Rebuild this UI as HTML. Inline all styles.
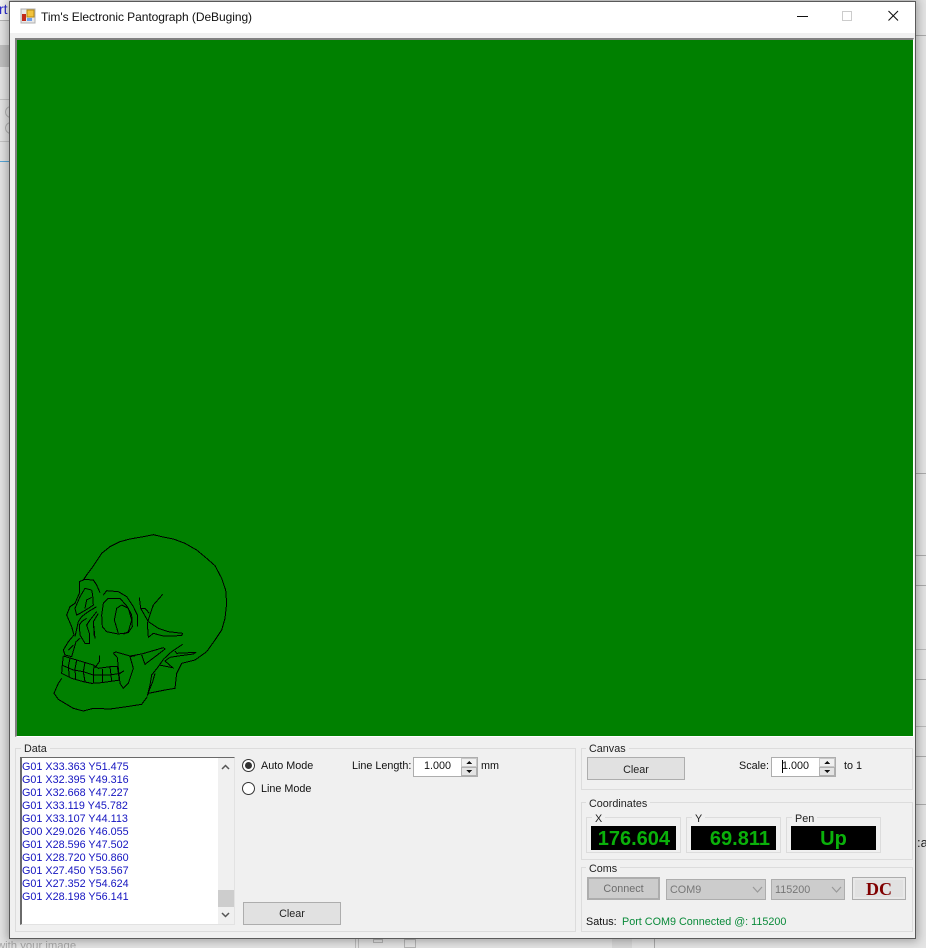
<!DOCTYPE html>
<html><head><meta charset="utf-8"><style>
html,body{margin:0;padding:0;width:926px;height:948px;overflow:hidden;background:#e4e4e4;font-family:"Liberation Sans",sans-serif;font-size:10.8px;color:#111}
div,span{position:absolute;box-sizing:border-box;white-space:nowrap}
.win{left:9px;top:1px;width:907px;height:938px;background:#f0f0f0;border:1px solid #5a5a5a;box-shadow:0 0 9px 2px rgba(0,0,0,.3)}
.gb{border:1px solid #dcdcdc}
.lg{background:#f0f0f0;padding:0 3px;line-height:13px;height:11px;color:#222}
.btn{background:#e1e1e1;border:1px solid #adadad;text-align:center;color:#222}
.li{left:22px;color:#1414c0;line-height:13px;height:13px}
.spin{background:#fff;border:1px solid #adadad}
.disp{background:#000;color:#0ab00a;font-weight:bold;font-size:20px;line-height:26px;height:24px;top:826px;width:85px}
.g{position:absolute;left:0;top:0;width:926px;height:948px}
</style></head><body>
<!-- background strips -->
<div style="left:0;top:0;width:9px;height:20px;background:#f4f4f4;color:#2a2ad0;font-size:14px;line-height:20px;overflow:hidden"><span style="left:-1px;top:-1px">rt</span></div>
<div style="left:0;top:20px;width:9px;height:1px;background:#b5b5b5"></div>
<div style="left:0;top:45px;width:9px;height:22px;background:#c0c0c0"></div>
<div style="left:0;top:99px;width:9px;height:1px;background:#c4c4c4"></div>
<div style="left:5px;top:106px;width:12px;height:12px;border:1px solid #b5b5b5;border-radius:50%"></div>
<div style="left:5px;top:122px;width:12px;height:12px;border:1px solid #b5b5b5;border-radius:50%"></div>
<div style="left:0;top:141px;width:9px;height:1px;background:#c4c4c4"></div>
<div style="left:0;top:161px;width:9px;height:1px;background:#57a7d8"></div>
<div style="left:916px;top:35px;width:10px;height:1px;background:#aaa"></div>
<div style="left:916px;top:473px;width:10px;height:1px;background:#aaa"></div>
<div style="left:916px;top:555px;width:10px;height:1px;background:#aaa"></div>
<div style="left:916px;top:585px;width:10px;height:1px;background:#aaa"></div>
<div style="left:916px;top:649px;width:10px;height:1px;background:#bbb"></div>
<div style="left:916px;top:679px;width:10px;height:1px;background:#aaa"></div>
<div style="left:916px;top:726px;width:10px;height:1px;background:#bbb"></div>
<div style="left:916px;top:756px;width:10px;height:1px;background:#aaa"></div>
<div style="left:916px;top:804px;width:10px;height:1px;background:#aaa"></div>
<div style="left:917px;top:835px;font-size:13px;color:#222">:a</div>
<div style="left:0;top:939px;width:90px;height:9px;overflow:hidden;font-size:11.300px;line-height:13px;color:#a8a8a8"><span style="left:-3px;top:1px">with your image</span></div>
<div style="left:355px;top:938px;width:1px;height:10px;background:#bbb"></div>
<div style="left:358px;top:938px;width:1px;height:10px;background:#bbb"></div>
<div style="left:373px;top:939px;width:10px;height:4px;border:1px solid #b5b5b5"></div>
<div style="left:404px;top:939px;width:12px;height:9px;border:1px solid #b5b5b5"></div>
<div style="left:612px;top:938px;width:20px;height:10px;background:#d8d8d8"></div>
<div style="left:654px;top:938px;width:1px;height:10px;background:#aaa"></div>

<div class="win"></div>
<!-- title bar -->
<div style="left:10px;top:2px;width:905px;height:31px;background:#fff"></div>
<svg class="g" style="position:absolute" shape-rendering="crispEdges">
<rect x="21" y="9" width="14" height="14" fill="#e8e8e8" stroke="#b0b0b0" stroke-width="0.6"/>
<rect x="22" y="14" width="4" height="7" fill="#c22a1a"/>
<rect x="27" y="10" width="7" height="7" fill="#f3c33c" stroke="#b88a10" stroke-width="0.6"/>
<rect x="27" y="18" width="5" height="3" fill="#6f9fe8"/>
<rect x="797" y="16" width="11" height="1" fill="#111"/>
<rect x="842.5" y="11.5" width="9" height="9" fill="none" stroke="#ccc"/>
</svg>
<svg class="g" style="position:absolute"><path d="M888.5 11L898 20.5M898 11L888.5 20.5" stroke="#111" stroke-width="1.1" fill="none"/></svg>
<div style="left:41px;top:10px;font-size:12px;letter-spacing:-.06px;line-height:14px;color:#111">Tim's Electronic Pantograph (DeBuging)</div>

<!-- canvas -->
<div style="left:15px;top:38px;width:899px;height:699px;background:#008000;border-top:2px solid #808080;border-left:2px solid #808080;border-right:1px solid #fff;border-bottom:1px solid #fff"></div>
<svg class="g" style="position:absolute" viewBox="-90 -1575 2778 2844" shape-rendering="crispEdges">
<g fill="none" stroke="#000" stroke-width="3">
<path d="M160 165L170 150 185 130 205 100 215 85 240 65 270 50 300 42 340 35 370 29 395 35 430 42 465 55 500 75 530 100 555 122 575 160 587 195 590 235 585 280 575 315 555 345 530 380 495 405 455 415 440 445 435 490 405 495 355 505 352 512"/>
<path d="M352 512L360 480 365 450 385 425 400 403 425 380 458 358"/>
<path d="M352 510L368 470 375 445"/>
<path d="M95 460L85 475 72 505 85 523 130 550 160 558 190 550 240 552 290 545 335 538 352 515"/>
<path d="M160 163L190 165 200 180 210 203"/>
<path d="M160 165L148 170 148 205 135 235 120 245 110 270 125 305 132 330"/>
<path d="M185 195L165 190 150 215 135 250 140 270 150 265 175 250 190 240 188 210 185 195"/>
<path d="M185 217L170 225 165 250"/>
<path d="M200 245L175 260 155 275 145 290 135 335"/>
<path d="M148 300L155 290 170 280M148 300L150 330 165 355 178 355 178 325 170 300 180 285 200 260"/>
<path d="M205 265L190 290 195 340M190 290L193 335"/>
<path d="M132 330L115 350 100 375 105 390 125 395 138 350 150 340M115 375L130 360"/>
<path d="M220 210L230 197 265 200 290 215 310 245 322 270 322 305"/>
<path d="M270 220L235 220 220 235 215 270 217 305 230 320 265 327 295 323 307 305 305 270 292 245 270 220"/>
<path d="M275 240L260 250 253 285 265 325M275 240L295 250 305 285 295 320 280 328"/>
<path d="M328 217L332 250 355 290 385 310 415 320 458 325 455 332 400 333 370 325 355 337 352 295 358 275 370 240 398 208"/>
<path d="M332 250L345 250 358 265"/>
<path d="M250 384L258 381 300 393 335 387 400 368 405 372 395 380 345 418 335 390"/>
<path d="M250 384L262 398 265 430 270 475 280 490 295 475 310 430 300 395 316 392"/>
<path d="M498 382L440 385 435 378M498 382L490 387 445 393 420 397 405 408 428 428 388 420"/>
<path d="M100 393L140 405 190 420 205 430 240 425 265 425"/>
<path d="M100 393L97 420 95 445 125 460 160 470 185 475 215 473 270 465"/>
<path d="M95 420L130 435 160 440 190 450 240 450 270 445 282 437"/>
<path d="M120 400L115 425 118 455M140 405L135 432 137 462M165 412L160 440 165 470M192 420L190 450 190 475M218 432L218 472M240 425L245 468M262 425L268 464"/>
<path d="M208 392L208 410 195 428"/>
</g></svg>

<!-- Data group -->
<div class="gb" style="left:15px;top:748px;width:561px;height:184px"></div>
<div class="lg" style="left:21px;top:743px">Data</div>
<div style="left:20px;top:757px;width:215px;height:168px;background:#fff;border-top:1px solid #6a6a6a;border-left:2px solid #6a6a6a;border-right:1px solid #e2e2e2;border-bottom:1px solid #e2e2e2"></div>
<div style="left:218px;top:758px;width:16px;height:166px;background:#f0f0f0"></div>
<div style="left:218px;top:890px;width:16px;height:17px;background:#cdcdcd"></div>
<svg class="g" style="position:absolute"><path d="M222 769L225.500 765.500 229 769M222 913L225.500 916.500 229 913" stroke="#555" stroke-width="1.500" fill="none"/></svg>
<div class="li" style="top:761px">G01 X33.363 Y51.475</div>
<div class="li" style="top:774px">G01 X32.395 Y49.316</div>
<div class="li" style="top:787px">G01 X32.668 Y47.227</div>
<div class="li" style="top:800px">G01 X33.119 Y45.782</div>
<div class="li" style="top:813px">G01 X33.107 Y44.113</div>
<div class="li" style="top:826px">G00 X29.026 Y46.055</div>
<div class="li" style="top:839px">G01 X28.596 Y47.502</div>
<div class="li" style="top:852px">G01 X28.720 Y50.860</div>
<div class="li" style="top:865px">G01 X27.450 Y53.567</div>
<div class="li" style="top:878px">G01 X27.352 Y54.624</div>
<div class="li" style="top:891px">G01 X28.198 Y56.141</div>

<!-- radios -->
<svg class="g" style="position:absolute">
<circle cx="248.500" cy="765.500" r="6" fill="#fff" stroke="#333"/>
<circle cx="248.500" cy="765.500" r="3.500" fill="#333"/>
<circle cx="248.500" cy="788.500" r="6" fill="#fff" stroke="#333"/>
</svg>
<div style="left:261px;top:759px;line-height:14px">Auto Mode</div>
<div style="left:261px;top:782px;line-height:14px">Line Mode</div>
<div style="left:352px;top:759px;line-height:14px">Line Length:</div>
<div class="spin" style="left:413px;top:757px;width:65px;height:20px"></div>
<div style="left:424px;top:759px;line-height:14px">1.000</div>
<div style="left:461px;top:758px;width:16px;height:9px;background:#f0f0f0;border:1px solid #c8c8c8"></div>
<div style="left:461px;top:767px;width:16px;height:9px;background:#e4e4e4;border:1px solid #b0b0b0"></div>
<svg class="g" style="position:absolute" shape-rendering="crispEdges"><path d="M466 764h6l-3-3zM466 770h6l-3 3z" fill="#111"/></svg>
<div style="left:481px;top:759px;line-height:14px">mm</div>
<div class="btn" style="left:243px;top:902px;width:98px;height:23px;line-height:22px">Clear</div>

<!-- Canvas group -->
<div class="gb" style="left:581px;top:748px;width:332px;height:42px"></div>
<div class="lg" style="left:586px;top:743px">Canvas</div>
<div class="btn" style="left:587px;top:757px;width:98px;height:23px;line-height:24px">Clear</div>
<div style="left:739px;top:759px;line-height:14px">Scale:</div>
<div class="spin" style="left:771px;top:757px;width:65px;height:20px"></div>
<div style="left:782px;top:759px;line-height:14px">1.000</div>
<div style="left:782px;top:760px;width:1px;height:13px;background:#000"></div>
<div style="left:819px;top:758px;width:16px;height:9px;background:#f0f0f0;border:1px solid #c8c8c8"></div>
<div style="left:819px;top:767px;width:16px;height:9px;background:#e4e4e4;border:1px solid #b0b0b0"></div>
<svg class="g" style="position:absolute" shape-rendering="crispEdges"><path d="M824 764h6l-3-3zM824 770h6l-3 3z" fill="#111"/></svg>
<div style="left:844px;top:759px;line-height:14px">to 1</div>

<!-- Coordinates -->
<div class="gb" style="left:581px;top:802px;width:332px;height:58px"></div>
<div class="lg" style="left:586px;top:798px">Coordinates</div>
<div class="gb" style="left:586px;top:817px;width:95px;height:36px"></div>
<div class="lg" style="left:592px;top:813px">X</div>
<div class="gb" style="left:686px;top:817px;width:95px;height:36px"></div>
<div class="lg" style="left:692px;top:813px">Y</div>
<div class="gb" style="left:786px;top:817px;width:95px;height:36px"></div>
<div class="lg" style="left:792px;top:813px">Pen</div>
<div class="disp" style="left:591px;text-align:right;padding-right:6px">176.604</div>
<div class="disp" style="left:691px;text-align:right;padding-right:6px">69.811</div>
<div class="disp" style="left:791px;text-align:center">Up</div>

<!-- Coms -->
<div class="gb" style="left:581px;top:867px;width:332px;height:65px"></div>
<div class="lg" style="left:586px;top:863px">Coms</div>
<div style="left:587px;top:877px;width:73px;height:23px;background:#ccc;border:2px solid #adadad;text-align:center;line-height:21px;color:#6d6d6d">Connect</div>
<div style="left:666px;top:879px;width:100px;height:21px;background:#ccc;border:1px solid #adadad;color:#777;line-height:20px;padding-left:3px">COM9</div>
<div style="left:771px;top:879px;width:74px;height:21px;background:#ccc;border:1px solid #adadad;color:#777;line-height:20px;padding-left:3px">115200</div>
<svg class="g" style="position:absolute"><path d="M753 887L757.500 892 762 887M832 887L836.500 892 841 887" stroke="#999" stroke-width="1.200" fill="none"/></svg>
<div style="left:852px;top:877px;width:54px;height:23px;background:#e1e1e1;border:1px solid #adadad;box-shadow:inset 0 0 0 2px #e8e8e8;text-align:center;font-family:'Liberation Serif',serif;font-weight:bold;font-size:18px;line-height:23px;color:#800000">DC</div>
<div style="left:586px;top:915px;line-height:14px">Satus:</div>
<div style="left:622px;top:915px;line-height:14px;color:#0a8a3a">Port COM9 Connected @: 115200</div>
</body></html>
